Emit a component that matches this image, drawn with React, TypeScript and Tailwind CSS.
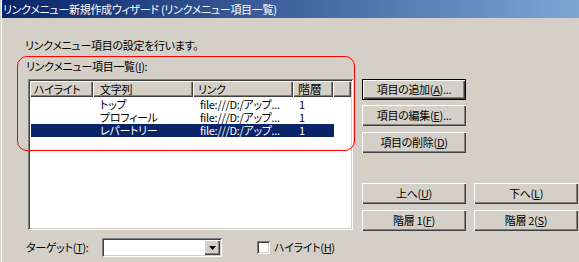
import clsx from "clsx";
import type { ReactNode } from "react";

const raised =
  "shadow-[inset_1px_1px_0_#ffffff,inset_-1px_-1px_0_#404040,inset_-2px_-2px_0_#808080]";
const sunken =
  "shadow-[inset_1px_1px_0_#808080,inset_-1px_-1px_0_#ffffff,inset_2px_2px_0_#404040,inset_-2px_-2px_0_#d4d0c8]";

const rows = [
  { text: "トップ", selected: false },
  { text: "プロフィール", selected: false },
  { text: "レパートリー", selected: true },
];

function Btn({ children, isDefault }: { children: ReactNode; isDefault?: boolean }) {
  return (
    <div
      className={clsx(
        "flex h-[21px] w-[104px] items-center justify-center bg-[#d4d0c8] leading-none text-black",
        isDefault ? "border border-black shadow-[inset_1px_1px_0_#ffffff,inset_-1px_-1px_0_#404040,inset_-2px_-2px_0_#808080]" : raised
      )}
    >
      {children}
    </div>
  );
}

export default function App() {
  return (
    <div className="relative h-[262px] w-[579px] overflow-hidden bg-[#d4d0c8] pl-[2px] font-['Noto_Sans_CJK_JP',sans-serif] text-[11px] tracking-[-0.3px] text-black shadow-[inset_1px_0_0_#d4d0c8,inset_2px_0_0_#ffffff] [font-feature-settings:'palt']">
      {/* title bar */}
      <div className="h-[18px] bg-linear-to-r from-[#0a246a] to-[#80a5d5] pl-[1px] leading-[18px] text-white">
        リンクメニュー新規作成ウィザード (リンクメニュー項目一覧)
      </div>

      <div className="pl-[23px] pt-[20px]">
        <p className="h-[14px] leading-[14px]">リンクメニュー項目の設定を行います。</p>

        <div className="mt-[7px] flex items-start">
          {/* list column */}
          <div className="w-[329px]">
            <p className="h-[14px] pl-[1px] leading-[14px]">
              リンクメニュー項目一覧(<span className="underline">I</span>):
            </p>

            <div className={`ml-[3px] mt-[6px] h-[151px] w-[325px] bg-white p-[2px] ${sunken}`}>
              <div className="flex h-[16px] bg-[#d4d0c8] leading-[16px]">
                <div className={`w-[63px] pl-[4px] ${raised}`}>ハイライト</div>
                <div className={`w-[100px] pl-[7px] ${raised}`}>文字列</div>
                <div className={`w-[100px] pl-[5px] ${raised}`}>リンク</div>
                <div className={`w-[40px] pl-[5px] text-[12px] ${raised}`}>階層</div>
                <div className={`flex-1 ${raised}`} />
              </div>
              <div className="pt-[1px]">
                {rows.map((r) => (
                  <div
                    key={r.text}
                    className={clsx(
                      "ml-[1px] flex h-[13px] w-[303px] items-center leading-[13px]",
                      r.selected && "bg-[#0a246a] text-white"
                    )}
                  >
                    <div className="w-[62px]" />
                    <div className="w-[100px] pl-[7px]">{r.text}</div>
                    <div className="w-[100px] pl-[7px]">file:///D:/アップ...</div>
                    <div className="w-[41px] pl-[6px]">1</div>
                  </div>
                ))}
              </div>
            </div>

            {/* target row */}
            <div className="mt-[8px] flex h-[19px] items-center">
              <div className="w-[77px] pl-[1px]">
                ターゲット(<span className="underline">T</span>):
              </div>
              <div className={`flex h-[19px] w-[120px] justify-end bg-white p-[2px] ${sunken}`}>
                <div className={`flex h-[15px] w-[16px] items-center justify-center bg-[#d4d0c8] ${raised}`}>
                  <svg width="7" height="4" viewBox="0 0 7 4">
                    <path d="M0 0h7L3.5 4z" fill="#000" />
                  </svg>
                </div>
              </div>
              <div className={`ml-[35px] h-[13px] w-[13px] bg-white ${sunken}`} />
              <div className="ml-[4px]">
                ハイライト(<span className="underline">H</span>)
              </div>
            </div>
          </div>

          {/* buttons column */}
          <div className="ml-[8px] mt-[20px] w-[216px]">
            <div className="flex flex-col gap-[5px]">
              <Btn isDefault>
                項目の追加(<span className="underline">A</span>)...
              </Btn>
              <Btn>
                項目の編集(<span className="underline">E</span>)...
              </Btn>
              <div className="mt-[1px]">
                <Btn>
                  項目の削除(<span className="underline">D</span>)
                </Btn>
              </div>
            </div>
            <div className="mt-[30px] grid grid-cols-[104px_104px] gap-x-[8px] gap-y-[6px]">
              <Btn>
                上へ(<span className="underline">U</span>)
              </Btn>
              <Btn>
                下へ(<span className="underline">L</span>)
              </Btn>
              <Btn>
                階層 1(<span className="underline">F</span>)
              </Btn>
              <Btn>
                階層 2(<span className="underline">S</span>)
              </Btn>
            </div>
          </div>
        </div>
      </div>

      {/* red annotation */}
      <div className="pointer-events-none absolute left-[17px] top-[56px] h-[95px] w-[338px] rounded-[10px] border border-[#ff0000]" />
    </div>
  );
}
